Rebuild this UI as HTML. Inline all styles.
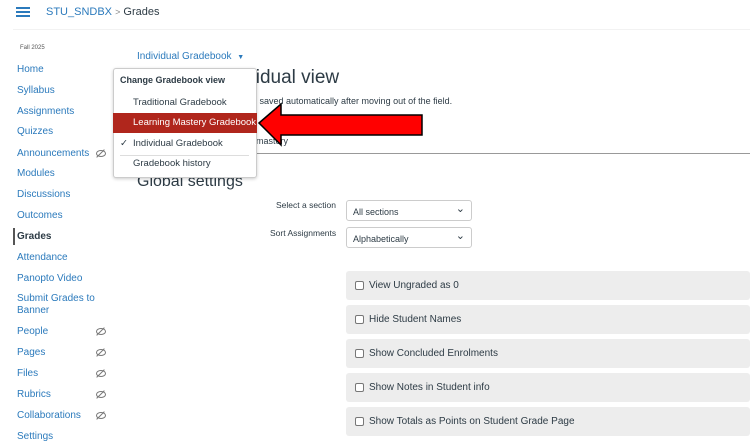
<!DOCTYPE html>
<html><head><style>
*{margin:0;padding:0;box-sizing:border-box}
body{width:750px;height:437px;overflow:hidden;background:#fff;font-family:"Liberation Sans",sans-serif;position:relative;color:#2d3b45}
.a{position:absolute;white-space:nowrap}
.nav{position:absolute;left:17px;font-size:10px;color:#2b7abc}
.eye{position:absolute;left:96px;width:10px;height:7px;border:1px solid #777;border-radius:50%}
.eye:after{content:"";position:absolute;left:3px;top:-3px;width:1px;height:11px;background:#777;transform:rotate(45deg)}
.panel{position:absolute;left:346px;width:404px;height:29px;background:#ededed;border-radius:3px;font-size:10px;color:#2d3b45}
.panel span{position:absolute;left:9px;top:10px;width:9px;height:9px;border:1px solid #777;border-radius:2px;background:#fff}
.panel b{font-weight:normal;position:absolute;left:23px;top:9px}
.sel{position:absolute;left:346px;width:126px;height:21px;border:1px solid #ccc;border-radius:3px;font-size:9px;padding:6px 0 0 6px}
.sel:after{content:"⌄";position:absolute;right:6px;top:1px;font-size:11px}
.mi{position:absolute;left:113px;width:144px;font-size:9.5px;padding-left:20px;white-space:nowrap}
</style></head><body>
<div class="a" style="left:16px;top:7px;width:14px;height:2px;background:#2b7abc;box-shadow:0 4px #2b7abc,0 8px #2b7abc"></div>
<div class="a" style="left:46px;top:6px;font-size:11px;color:#2b7abc">STU_SNDBX <span style="color:#888;font-size:9px">&gt;</span> <span style="color:#2d3b45">Grades</span></div>
<div class="a" style="left:13px;top:29px;width:737px;height:1px;background:#f2f2f2"></div>
<div class="a" style="left:20px;top:45px;font-size:6px;color:#555">Fall 2025</div>
<div class="nav" style="top:64px">Home</div>
<div class="nav" style="top:85px">Syllabus</div>
<div class="nav" style="top:106px">Assignments</div>
<div class="nav" style="top:126px">Quizzes</div>
<div class="nav" style="top:148px">Announcements</div><div class="eye" style="top:150px"></div>
<div class="nav" style="top:168px">Modules</div>
<div class="nav" style="top:189px">Discussions</div>
<div class="nav" style="top:210px">Outcomes</div>
<div class="a" style="left:13px;top:228px;width:2px;height:17px;background:#555"></div>
<div class="nav" style="top:231px;color:#2d3b45;font-weight:bold">Grades</div>
<div class="nav" style="top:252px">Attendance</div>
<div class="nav" style="top:273px">Panopto Video</div>
<div class="nav" style="top:293px;line-height:12px">Submit Grades to<br>Banner</div>
<div class="nav" style="top:326px">People</div><div class="eye" style="top:328px"></div>
<div class="nav" style="top:347px">Pages</div><div class="eye" style="top:349px"></div>
<div class="nav" style="top:368px">Files</div><div class="eye" style="top:370px"></div>
<div class="nav" style="top:389px">Rubrics</div><div class="eye" style="top:391px"></div>
<div class="nav" style="top:410px">Collaborations</div><div class="eye" style="top:412px"></div>
<div class="nav" style="top:431px">Settings</div>

<div class="a" style="left:137px;top:51px;font-size:10px;color:#2b7abc">Individual Gradebook <span style="font-size:7px;margin-left:3px">▼</span></div>
<div class="a" style="left:242px;top:67px;font-size:19px;color:#2d3b45">ividual view</div>
<div class="a" style="left:252px;top:96px;font-size:9px">e saved automatically after moving out of the field.</div>
<div class="a" style="left:256px;top:136px;font-size:9px">mastery</div>
<div class="a" style="left:240px;top:153px;width:510px;height:1px;background:#999"></div>
<div class="a" style="left:137px;top:173px;font-size:16px">Global settings</div>

<div class="a" style="left:113px;top:68px;width:144px;height:110px;background:#fff;border:1px solid #ccc;border-radius:3px;box-shadow:0 1px 3px rgba(0,0,0,.2)"></div>
<div class="mi" style="top:75px;padding-left:7px;font-weight:bold;font-size:9px">Change Gradebook view</div>
<div class="mi" style="top:97px">Traditional Gradebook</div>
<div class="mi" style="top:113px;height:20px;background:#b0261c;color:#fff;padding-top:4px">Learning Mastery Gradebook</div>
<div class="mi" style="top:138px"><span style="position:absolute;left:7px">✓</span>Individual Gradebook</div>
<div class="a" style="left:120px;top:155px;width:129px;height:1px;background:#ddd"></div>
<div class="mi" style="top:158px">Gradebook history</div>

<svg class="a" style="left:255px;top:100px" width="172" height="50"><polygon points="4,23 26,4 26,15 167,15 167,35 26,35 26,45" fill="#f00" stroke="#000" stroke-width="1.5"/></svg>

<div class="a" style="left:276px;top:200px;font-size:8.5px">Select a section</div>
<div class="sel" style="top:200px">All sections</div>
<div class="a" style="left:270px;top:228px;font-size:8.5px">Sort Assignments</div>
<div class="sel" style="top:227px">Alphabetically</div>

<div class="panel" style="top:271px"><span></span><b>View Ungraded as 0</b></div>
<div class="panel" style="top:305px"><span></span><b>Hide Student Names</b></div>
<div class="panel" style="top:339px"><span></span><b>Show Concluded Enrolments</b></div>
<div class="panel" style="top:373px"><span></span><b>Show Notes in Student info</b></div>
<div class="panel" style="top:407px"><span></span><b>Show Totals as Points on Student Grade Page</b></div>
</body></html>
